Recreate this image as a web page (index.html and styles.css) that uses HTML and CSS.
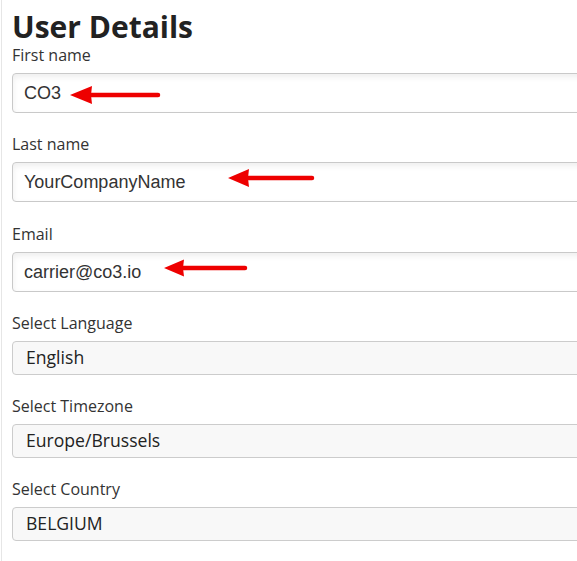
FILE: index.html
```html
<!DOCTYPE html>
<html lang="en">
<head>
<meta charset="utf-8">
<title>User Details</title>
<link rel="stylesheet" href="styles.css">
</head>
<body>
<div class="page">
  <h1 class="title">User Details</h1>

  <div class="field">
    <label class="label" for="first">First name</label>
    <div class="control">
      <input class="text-input" id="first" type="text" value="CO3">
      <svg class="arrow arrow-1" width="92" height="20" viewBox="0 0 92 20"><polygon points="0,10 22,1 21,10 22,19" fill="#ee0000"/><line x1="19" y1="10" x2="88" y2="10" stroke="#ee0000" stroke-width="4.5" stroke-linecap="round"/></svg>
    </div>
  </div>

  <div class="field">
    <label class="label" for="last">Last name</label>
    <div class="control">
      <input class="text-input" id="last" type="text" value="YourCompanyName">
      <svg class="arrow arrow-2" width="88" height="20" viewBox="0 0 88 20"><polygon points="0,10 21,1 20,10 21,19" fill="#ee0000"/><line x1="18" y1="10" x2="84" y2="10" stroke="#ee0000" stroke-width="4.5" stroke-linecap="round"/></svg>
    </div>
  </div>

  <div class="field field-wide">
    <label class="label" for="email">Email</label>
    <div class="control">
      <input class="text-input" id="email" type="text" value="carrier@co3.io">
      <svg class="arrow arrow-3" width="85" height="20" viewBox="0 0 85 20"><polygon points="0,10 20,1.5 19,10 20,18.5" fill="#ee0000"/><line x1="17" y1="10" x2="81" y2="10" stroke="#ee0000" stroke-width="4.5" stroke-linecap="round"/></svg>
    </div>
  </div>

  <div class="field">
    <label class="label" for="lang">Select Language</label>
    <select class="select" id="lang"><option>English</option></select>
  </div>

  <div class="field">
    <label class="label" for="tz">Select Timezone</label>
    <select class="select" id="tz"><option>Europe/Brussels</option></select>
  </div>

  <div class="field">
    <label class="label" for="country">Select Country</label>
    <select class="select" id="country"><option>BELGIUM</option></select>
  </div>
</div>
</body>
</html>
```

FILE: styles.css
```css
html, body {
  margin: 0;
  padding: 0;
  background: #ffffff;
  overflow: hidden;
}

.page {
  margin-left: 1px;
  border-left: 1px solid #e6e6e6;
  min-height: 561px;
  padding: 9px 0 0 10px;
  font-family: "Open Sans", "Liberation Sans", sans-serif;
  color: #333333;
}

.title {
  margin: 0;
  font-family: "Open Sans", sans-serif;
  font-weight: 700;
  font-size: 30px;
  line-height: 36px;
  color: #222222;
}

.field {
  margin-bottom: 21px;
}

.field-wide {
  margin-top: 22px;
}

.label {
  display: block;
  font-size: 16px;
  line-height: 20px;
  margin-bottom: 8px;
  color: #333333;
}

.control {
  position: relative;
}

.text-input {
  display: block;
  box-sizing: border-box;
  width: 620px;
  height: 40px;
  margin: 0;
  padding: 0 11px;
  border: 1px solid #c9c9c9;
  border-radius: 4px;
  background: #ffffff;
  box-shadow: inset 0 3px 6px rgba(0, 0, 0, 0.07);
  font-family: "Liberation Sans", Arial, sans-serif;
  font-size: 18px;
  color: #333333;
  outline: none;
}

.arrow {
  position: absolute;
  display: block;
}

.arrow-1 {
  left: 58px;
  top: 12px;
}

.arrow-2 {
  left: 216px;
  top: 6px;
}

.arrow-3 {
  left: 152px;
  top: 6px;
}

.select {
  display: block;
  box-sizing: border-box;
  width: 620px;
  height: 34px;
  margin: 0;
  padding: 0 13px 3px;
  border: 1px solid #cccccc;
  border-radius: 4px;
  background: #f8f8f8;
  -webkit-appearance: none;
  appearance: none;
  font-family: "Open Sans", sans-serif;
  font-size: 17.6px;
  color: #222222;
  outline: none;
}
```
